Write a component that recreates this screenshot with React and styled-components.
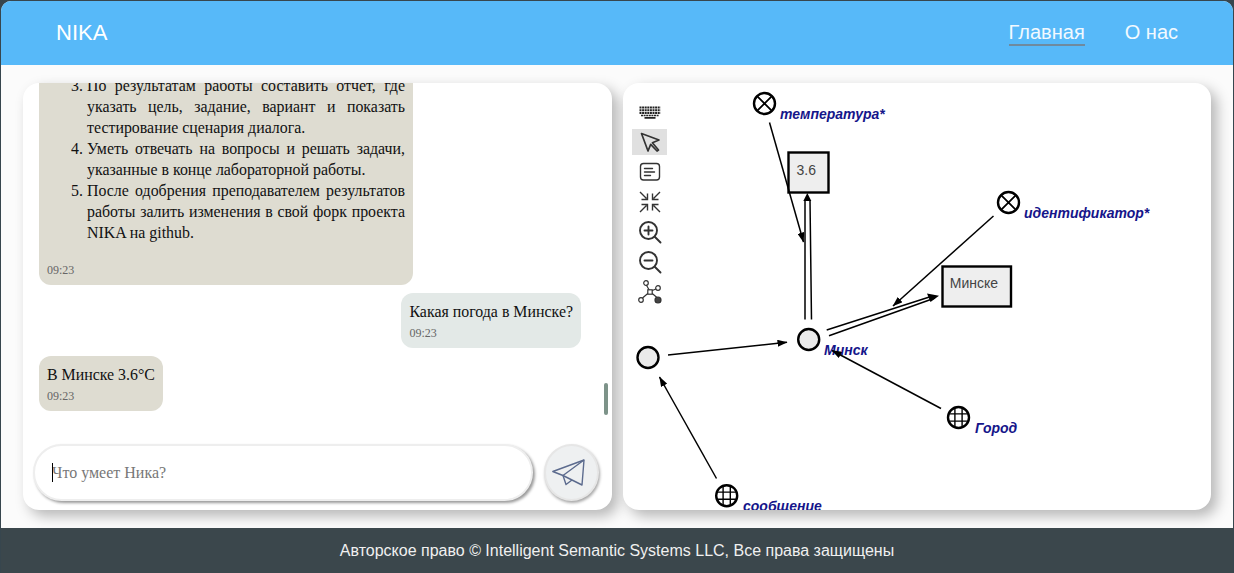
import React from "react";
import styled, { createGlobalStyle } from "styled-components";

const GlobalStyle = createGlobalStyle`
  html, body {
    margin: 0;
    height: 100%;
    overflow: hidden;
    background: #37464e;
  }
  * {
    box-sizing: border-box;
  }
`;

const ToolIcon = ({ children, ...rest }) => (
  <svg width="24" height="24" viewBox="0 0 24 24" fill="none" stroke="#333" strokeWidth="1.5" {...rest}>
    {children}
  </svg>
);

const tools = [
  {
    name: "keyboard",
    icon: (
      <ToolIcon stroke="#222">
        <path d="M1.5 7.5h21M1.5 10.2h21M1.5 12.9h21" strokeWidth="2" strokeDasharray="2 .6" />
        <path d="M3 15.5h18" strokeWidth="1.4" strokeDasharray="2 .6" />
        <path d="M6.5 17.8h11" strokeWidth="1.8" />
      </ToolIcon>
    ),
  },
  {
    name: "cursor",
    active: true,
    icon: (
      <ToolIcon strokeWidth="1.7" strokeLinejoin="round">
        <path d="M3.5 3.5 21 10l-6.6 2.7L20.5 20 19 21l-6.3-6.6L10 21z" />
      </ToolIcon>
    ),
  },
  {
    name: "text",
    icon: (
      <ToolIcon strokeWidth="1.4" strokeLinecap="round">
        <rect x="2.5" y="3.5" width="19" height="16.5" rx="3" />
        <path d="M6.5 8.5h8M6.5 12h10M6.5 15.5h6" />
      </ToolIcon>
    ),
  },
  {
    name: "collapse",
    icon: (
      <ToolIcon strokeWidth="1.4">
        <path d="M2 2l6.5 6.5M3.5 9.5h6v-6M22 2l-6.5 6.5M20.5 9.5h-6v-6M2 22l6.5-6.5M3.5 14.5h6v6M22 22l-6.5-6.5M20.5 14.5h-6v6" />
      </ToolIcon>
    ),
  },
  {
    name: "zoom-in",
    icon: (
      <ToolIcon strokeWidth="1.9" strokeLinecap="round">
        <circle cx="10.5" cy="10.5" r="8.5" />
        <path d="M17 17l5.5 5.5M6.5 10.5h8M10.5 6.5v8" />
      </ToolIcon>
    ),
  },
  {
    name: "zoom-out",
    icon: (
      <ToolIcon strokeWidth="1.9" strokeLinecap="round">
        <circle cx="10.5" cy="10.5" r="8.5" />
        <path d="M17 17l5.5 5.5M6.5 10.5h8" />
      </ToolIcon>
    ),
  },
  {
    name: "graph",
    icon: (
      <ToolIcon strokeWidth="1.2">
        <path d="M8 4.5l3.5 6M12 11.5l7-3M11.5 12l-7 6M12.5 12l7 6" />
        <circle cx="8" cy="3" r="2.3" fill="#fff" />
        <circle cx="20" cy="8" r="2.3" fill="#fff" />
        <rect x="9.8" y="9.8" width="4.4" height="4.4" fill="#fff" />
        <circle cx="3" cy="20" r="2.3" fill="#fff" />
        <circle cx="20" cy="20" r="3" fill="#444" />
      </ToolIcon>
    ),
  },
];

const Sc = ({ x, y, label, lx, ly, kind }) => (
  <g>
    <circle cx={x} cy={y} r="10.5" fill={kind === "plain" ? "#eaeaea" : "#fff"} stroke="#000" strokeWidth="2.4" />
    {kind === "cross" && (
      <path
        d={`M${x - 7.4} ${y - 7.4}L${x + 7.4} ${y + 7.4}M${x + 7.4} ${y - 7.4}L${x - 7.4} ${y + 7.4}`}
        stroke="#000"
        strokeWidth="1.8"
      />
    )}
    {kind === "grid" && (
      <path
        d={`M${x - 3.6} ${y - 9.6}V${y + 9.6}M${x + 3.6} ${y - 9.6}V${y + 9.6}M${x - 9.6} ${y - 3.6}H${x + 9.6}M${x - 9.6} ${y + 3.6}H${x + 9.6}`}
        stroke="#000"
        strokeWidth="1.4"
      />
    )}
    {label && (
      <NodeLabel x={lx} y={ly}>
        {label}
      </NodeLabel>
    )}
  </g>
);

const Arrow = ({ d }) => <path d={d} fill="none" stroke="#000" strokeWidth="1.5" markerEnd="url(#head)" />;

const Scene = () => (
  <Canvas viewBox="623 83 588 427">
    <defs>
      <marker id="head" markerWidth="10" markerHeight="7" refX="9.5" refY="3.5" orient="auto" markerUnits="userSpaceOnUse">
        <path d="M0 0L10 3.5L0 7z" fill="#000" />
      </marker>
    </defs>

    <path d="M805 319.5V200M811.5 319.5L810 200" fill="none" stroke="#000" strokeWidth="1.5" />
    <path d="M807.3 193l-4 8h8z" fill="#000" />
    <path d="M826.7 330L931 296.5M829 335.7L935 298" fill="none" stroke="#000" strokeWidth="1.5" />
    <path d="M939 295.7l-12 -2.3 3.5 8.5z" fill="#000" />

    <ValueBox x="788.5" y="152.5" width="40" height="40" />
    <ValueText x="796.5" y="174.5">3.6</ValueText>
    <ValueBox x="942.5" y="266.5" width="68.5" height="40" />
    <ValueText x="949.8" y="288">Минске</ValueText>

    <Sc x={764.5} y={103.5} kind="cross" label="температура*" lx={780} ly={119} />
    <Sc x={1008.5} y={202.5} kind="cross" label="идентификатор*" lx={1024} ly={218} />
    <Sc x={808.7} y={339.5} kind="plain" label="Минск" lx={824} ly={355} />
    <Sc x={648} y={357.5} kind="plain" />
    <Sc x={958.5} y={417.5} kind="grid" label="Город" lx={975} ly={433} />
    <Sc x={726.7} y={495.7} kind="grid" label="сообщение" lx={743} ly={511} />

    <Arrow d="M769.5 122.5L803.5 242" />
    <Arrow d="M993.5 216L893 306" />
    <Arrow d="M668 355L787 342.3" />
    <Arrow d="M941 408.5L832 350.5" />
    <Arrow d="M716.5 478.5L659.5 377" />
  </Canvas>
);

const App = () => (
  <Page>
    <GlobalStyle />
    <Frame>
      <Header>
        <Brand>NIKA</Brand>
        <Nav>
          <NavLink $active>Главная</NavLink>
          <NavLink>О нас</NavLink>
        </Nav>
      </Header>
      <Main>
        <ChatPanel>
          <Messages>
            <Bubble $wide>
              <Steps start={3}>
                <li>По результатам работы составить отчет, где указать цель, задание, вариант и показать тестирование сценария диалога.</li>
                <li>Уметь отвечать на вопросы и решать задачи, указанные в конце лабораторной работы.</li>
                <li>После одобрения преподавателем результатов работы залить изменения в свой форк проекта NIKA на github.</li>
              </Steps>
              <Time>09:23</Time>
            </Bubble>
            <Bubble $mine>
              Какая погода в Минске?
              <Time>09:23</Time>
            </Bubble>
            <Bubble>
              В Минске 3.6°C
              <Time>09:23</Time>
            </Bubble>
            <ScrollThumb />
          </Messages>
          <Composer>
            <InputBox>
              <Caret />
              <Placeholder>Что умеет Ника?</Placeholder>
            </InputBox>
            <SendButton aria-label="Отправить">
              <PlaneIcon width="33" height="27" viewBox="0 0 33 27" fill="none" stroke="#5c6b8e" strokeWidth="1.4" strokeLinejoin="round">
                <path d="M.8 12.5L32 1L30 26L11 16.5z" />
                <path d="M32 1L11 16.5L14 25.5L20 21" />
              </PlaneIcon>
            </SendButton>
          </Composer>
        </ChatPanel>
        <ScenePanel>
          <Scene />
          <Toolbar>
            {tools.map((tool) => (
              <ToolButton key={tool.name} $active={tool.active}>
                {tool.icon}
              </ToolButton>
            ))}
          </Toolbar>
        </ScenePanel>
      </Main>
      <Footer>Авторское право © Intelligent Semantic Systems LLC, Все права защищены</Footer>
    </Frame>
  </Page>
);

const Page = styled.div`
  height: 100vh;
  padding: 1px 1px 0;
  font-family: "Liberation Sans", Arial, sans-serif;
`;

const Frame = styled.div`
  height: 100%;
  display: flex;
  flex-direction: column;
  background: #fbfbfb;
  border-radius: 10px 10px 0 0;
  overflow: hidden;
`;

const Header = styled.header`
  height: 64px;
  flex: none;
  display: flex;
  align-items: center;
  justify-content: space-between;
  padding: 0 55px 0 55px;
  background: #57b9f9;
  color: #fff;
`;

const Brand = styled.div`
  font-size: 22px;
`;

const Nav = styled.nav`
  display: flex;
  gap: 40px;
`;

const NavLink = styled.a`
  font-size: 20px;
  line-height: 24px;
  color: #f2f9ff;
  border-bottom: 2px solid ${(p) => (p.$active ? "#6f8a9e" : "transparent")};
`;

const Main = styled.main`
  flex: 1;
  min-height: 0;
  display: grid;
  grid-template-columns: 589px 588px;
  column-gap: 11px;
  padding: 18px 0 18px 22px;
`;

const Panel = styled.section`
  position: relative;
  background: #fff;
  border-radius: 16px;
  box-shadow: 6px 6px 14px rgba(0, 0, 0, 0.28);
  overflow: hidden;
`;

const ChatPanel = styled(Panel)`
  display: flex;
  flex-direction: column;
  font-family: "Liberation Serif", "Times New Roman", serif;
`;

const Messages = styled.div`
  position: relative;
  flex: 1;
  min-height: 0;
  display: flex;
  flex-direction: column;
  justify-content: flex-end;
  gap: 8px;
  padding: 0 31px 33px 16px;
  overflow: hidden;
`;

const Bubble = styled.div`
  flex: none;
  align-self: ${(p) => (p.$mine ? "flex-end" : "flex-start")};
  width: ${(p) => (p.$wide ? "374px" : "auto")};
  padding: 8px 8px 6px;
  font-size: 15.9px;
  line-height: 21px;
  color: #111;
  border-radius: ${(p) => (p.$wide ? "0 0 12px 12px" : "12px")};
  background: ${(p) => (p.$mine ? "#e3e9e7" : "#dedcd1")};
`;

const Steps = styled.ol`
  margin: 0 0 16px;
  padding-left: 40px;
  text-align: justify;
`;

const Time = styled.div`
  font-size: 12px;
  line-height: 18px;
  padding-top: 2px;
  box-sizing: content-box;
  color: #666;
`;

const ScrollThumb = styled.div`
  position: absolute;
  right: 4px;
  bottom: 29px;
  width: 4px;
  height: 32px;
  border-radius: 2px;
  background: #7d9389;
`;

const Composer = styled.div`
  flex: none;
  display: flex;
  gap: 11px;
  padding: 0 12px 9px 10px;
`;

const InputBox = styled.div`
  position: relative;
  width: 500px;
  flex: none;
  height: 57px;
  display: flex;
  align-items: center;
  padding-left: 17px;
  border: 2px solid #eee;
  border-radius: 29px;
  box-shadow: 2px 2px 3px rgba(0, 0, 0, 0.4);
  background: #fff;
`;

const Caret = styled.span`
  position: absolute;
  left: 17px;
  top: 17px;
  width: 1px;
  height: 19px;
  background: #000;
`;

const Placeholder = styled.span`
  font-size: 16px;
  color: #777;
`;

const SendButton = styled.button`
  width: 55px;
  height: 57px;
  flex: none;
  padding: 0 6px 0 0;
  display: flex;
  align-items: center;
  justify-content: center;
  border: 2px solid #e6e6e6;
  border-radius: 50%;
  box-shadow: 1px 2px 3px rgba(0, 0, 0, 0.35);
  background: #eef0f1;
`;

const PlaneIcon = styled.svg`
  flex: none;
`;

const ScenePanel = styled(Panel)``;

const Canvas = styled.svg`
  display: block;
  width: 100%;
  height: 100%;
`;

const NodeLabel = styled.text`
  font: italic bold 14px "Liberation Sans", Arial, sans-serif;
  fill: #15158a;
`;

const ValueBox = styled.rect`
  fill: #eee;
  stroke: #000;
  stroke-width: 2.4;
`;

const ValueText = styled.text`
  font: 14px "Liberation Sans", Arial, sans-serif;
  fill: #444;
`;

const Toolbar = styled.div`
  position: absolute;
  left: 9px;
  top: 16px;
  display: flex;
  flex-direction: column;
  gap: 4px;
`;

const ToolButton = styled.div`
  width: 35px;
  height: 26px;
  display: flex;
  align-items: center;
  justify-content: center;
  background: ${(p) => (p.$active ? "#e0e0e0" : "transparent")};
`;

const Footer = styled.footer`
  height: 45px;
  flex: none;
  display: flex;
  align-items: center;
  justify-content: center;
  background: #3b474c;
  color: #f0f0f0;
  font-size: 16px;
`;

export default App;
